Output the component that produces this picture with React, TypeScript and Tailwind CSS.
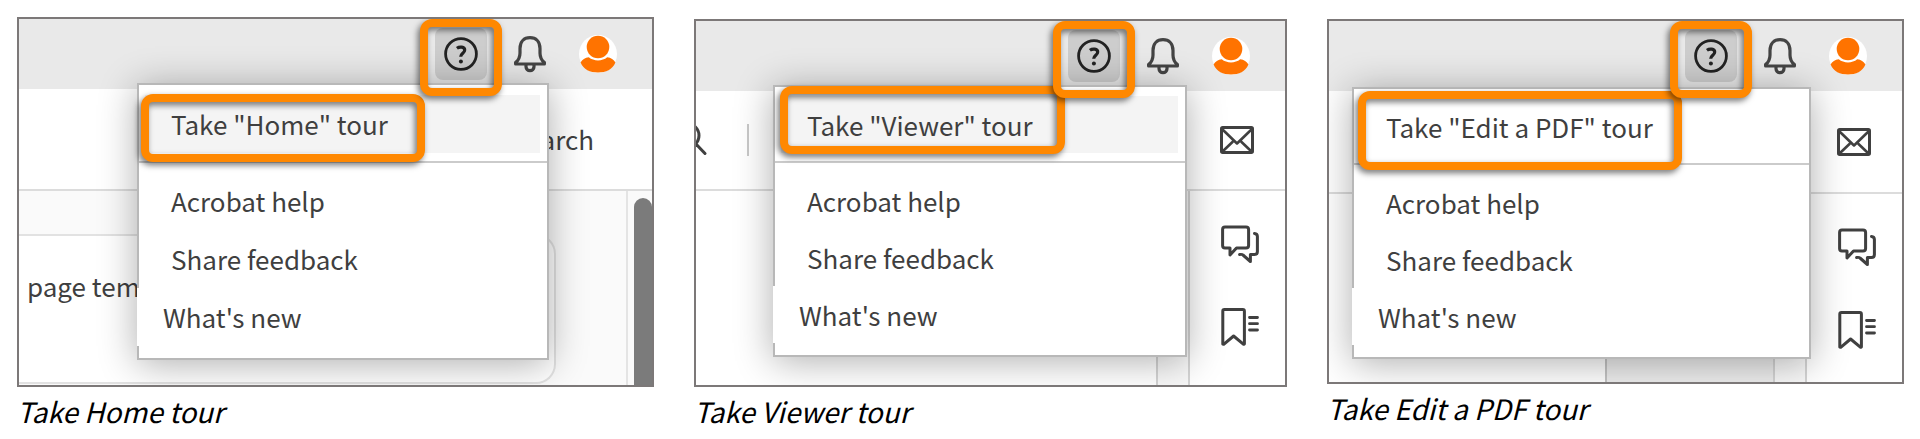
import { clsx } from 'clsx'

type Tour = {
    name: string
    caption: string
    figure: string
    toolbar: string
    body: string
    menu: string
    row: string
    active: string
    callout: string
}

const tours: Tour[] = [
    {
        name: 'Home',
        caption: 'Take Home tour',
        figure: 'grow-[637] pt-[17px]',
        toolbar: 'h-[102px]',
        body: 'h-[194px]',
        menu: 'top-16 right-[103px] w-[412px] pt-[10px]',
        row: 'h-[58px]',
        active: 'bg-[#f4f4f4]',
        callout: '-left-1 -top-px -bottom-[9px] w-[284px]',
    },
    {
        name: 'Viewer',
        caption: 'Take Viewer tour',
        figure: 'grow-[593] pt-[19px]',
        toolbar: 'h-[100px]',
        body: 'h-[194px]',
        menu: 'top-16 right-[98px] w-[414px] pt-[9px]',
        row: 'h-[57px]',
        active: 'bg-[#f4f4f4]',
        callout: '-left-px -top-[10px] -bottom-px w-[285px]',
    },
    {
        name: 'Edit a PDF',
        caption: 'Take Edit a PDF tour',
        figure: 'grow-[577] pt-[19px]',
        toolbar: 'h-[103px]',
        body: 'h-[188px]',
        menu: 'top-[66px] right-[91px] w-[459px] pt-[9px]',
        row: 'h-[57px]',
        active: 'bg-white',
        callout: '-left-0.5 -top-[7px] -bottom-[15px] w-[324px]',
    },
]

function HelpIcon() {
    return (
        <svg width="34" height="34" viewBox="0 0 34 34" fill="none" stroke="#222" strokeWidth="2.8">
            <circle cx="17" cy="17" r="15.4" />
            <path d="M12.9 11.2c2.6-1.8 7.8-1.7 7.8 1.9 0 3.1-4 3.3-4 6.7" strokeWidth="3.2" />
            <circle cx="16.9" cy="24.4" r="2" fill="#222" stroke="none" />
        </svg>
    )
}

function BellIcon() {
    return (
        <svg width="32" height="37" viewBox="0 0 32 37" fill="none" stroke="#444" strokeWidth="3.2" strokeLinejoin="round">
            <path d="M1.6 28v-1.4c3.2-2.6 4.4-5.6 4.4-9.6v-4.5C6 5.6 10 1.7 16 1.7s10 3.9 10 10.800V17c0 4 1.2 7 4.4 9.6V28z" />
            <path d="M12 29v1.7a4 4 0 0 0 8 0V29" />
        </svg>
    )
}

function Avatar() {
    return (
        <svg width="38" height="38" viewBox="0 0 38 38">
            <circle cx="19" cy="19" r="19" fill="#fff" />
            <circle cx="19" cy="12" r="11.3" fill="#ff7300" />
            <path d="M9.8 22.3c4.8 4.200 13.6 4.200 18.4 0 3.8.3 6.6 2.300 8.2 5.200C33.5 34.500 27 37.500 19 37.500S4.5 34.500 1.6 27.500c1.6-2.900 4.400-4.900 8.2-5.200z" fill="#ff7300" />
        </svg>
    )
}

function MailIcon() {
    return (
        <svg width="34" height="28" viewBox="0 0 34 28" fill="none" stroke="#404040" strokeWidth="3" strokeLinejoin="round">
            <rect x="1.5" y="1.5" width="31" height="25" rx="1.2" />
            <path d="M2 3l15 14.5L32 3M2.5 25.500l10.5-10M31.5 25.500L21 15.500" strokeWidth="2.6" />
        </svg>
    )
}

function CommentsIcon() {
    return (
        <svg width="38" height="38" viewBox="0 0 38 38" fill="none" stroke="#404040" strokeWidth="3" strokeLinejoin="round" strokeLinecap="round">
            <path d="M4 1.900h21c1.600 0 2.600 1 2.600 2.500v16c0 1.600-1 2.500-2.600 2.500H15.500L9 30v-7.100H4c-1.500 0-2.400-.9-2.400-2.500v-16c0-1.500.9-2.500 2.400-2.500z" />
            <path d="M33.500 8.500c1.900.2 2.900 1.200 2.900 3V26.500c0 2-1 3-3 3h-4V36.500l-7.400-6.500c-.6-.6-1.400-.8-3.400-.5" />
        </svg>
    )
}

function BookmarkIcon() {
    return (
        <svg width="38" height="38" viewBox="0 0 38 38" fill="none" stroke="#404040" strokeWidth="3" strokeLinejoin="round" strokeLinecap="round">
            <path d="M3.400 1.600h18.400c1 0 1.600.6 1.600 1.600v32.800l-.8.3L12.600 28 2.700 36.300l-.9-.3V3.200c0-1 .6-1.600 1.600-1.600z" />
            <path d="M28.500 9.500h8M28.500 15.700h8M28.500 22h8" strokeWidth="2.800" />
        </svg>
    )
}

function SearchIcon() {
    return (
        <svg width="11" height="32" viewBox="0 0 11 32" fill="none" stroke="#404040" strokeWidth="3" strokeLinecap="round">
            <circle cx="-9" cy="11.5" r="12" />
            <path d="M0 20l9 9.5" />
        </svg>
    )
}

// orange outline laid over the part of the UI being explained
function Callout({ className }: { className: string }) {
    return (
        <span
            className={clsx(
                'absolute z-20 border-8 border-[#ff8800] rounded-xl pointer-events-none drop-shadow-[-2px_3px_3px_rgba(0,0,0,0.55)]',
                className,
            )}
        />
    )
}

function Header() {
    return (
        <header className="flex items-center justify-end h-[70px] pr-[35px] bg-[#e9e9e9]">
            <button aria-label="Help" className="relative flex items-center justify-center size-[52px] mr-[27px] rounded-lg bg-[#cdcdcd]">
                <HelpIcon />
                <Callout className="-inset-x-[15px] -top-[9px] -bottom-4" />
            </button>
            <button aria-label="Notifications" className="mr-[33px]">
                <BellIcon />
            </button>
            <button aria-label="Account">
                <Avatar />
            </button>
        </header>
    )
}

function HomePage({ tour }: { tour: Tour }) {
    return (
        <>
            <div className={clsx('flex items-center justify-end pr-[58px] border-b-2 border-[#dcdcdc]', tour.toolbar)}>
                <span>arch</span>
            </div>
            <div className={clsx('flex bg-[#fafafa]', tour.body)}>
                <div className="grow pt-[43px] pr-[70px]">
                    <div className="flex h-[150px] pl-2 pt-7 rounded-r-[20px] border-2 border-l-0 border-[#e2e2e2] bg-white">
                        <span className="leading-[44px]">page tem</span>
                    </div>
                </div>
                <div className="w-[26px] pt-[7px] pl-[6px] border-l-2 border-[#e4e4e4]">
                    <div className="h-full rounded-t-[10px] bg-[#7b7b7b]" />
                </div>
            </div>
        </>
    )
}

function DocumentPage({ tour }: { tour: Tour }) {
    const viewer = tour.name === 'Viewer'
    return (
        <>
            <div className={clsx('flex items-center border-b-2 border-[#dcdcdc]', tour.toolbar)}>
                {viewer && (
                    <>
                        <button aria-label="Search">
                            <SearchIcon />
                        </button>
                        <span className="w-0.5 h-8 ml-10 bg-[#c9c9c9]" />
                    </>
                )}
                <div className="flex justify-center w-24 ml-auto">
                    <button aria-label="Email">
                        <MailIcon />
                    </button>
                </div>
            </div>
            <div className={clsx('flex', tour.body)}>
                <div className="grow" />
                <div className={clsx(viewer ? 'w-0' : 'w-[168px] border-l-2 border-[#c4c4c4] bg-[#ededed]')} />
                <div className="w-[34px] border-x-2 border-[#d4d4d4] bg-[#f8f8f8]" />
                <div className="flex flex-col items-center gap-[45px] w-[95px] pt-[34px] pl-1">
                    <button aria-label="Comments">
                        <CommentsIcon />
                    </button>
                    <button aria-label="Bookmarks">
                        <BookmarkIcon />
                    </button>
                </div>
            </div>
        </>
    )
}

function HelpMenu({ tour }: { tour: Tour }) {
    const item = 'flex items-center pl-[26px] text-left'
    return (
        <div className={clsx('absolute z-10 border-2 border-[#b8b8b8] bg-white pb-3 shadow-[0_4px_36px_rgba(0,0,0,0.32)]', tour.menu)}>
            <div className="flex flex-col pl-1.5 pr-[7px]">
                <button className={clsx('relative', item, tour.row, tour.active)}>
                    Take "{tour.name}" tour
                    <Callout className={tour.callout} />
                </button>
            </div>
            <div className="flex flex-col mt-2 pt-[9px] pl-1.5 border-t-2 border-[#cbcbcb]">
                <button className={clsx(item, tour.row)}>Acrobat help</button>
                <button className={clsx(item, tour.row)}>Share feedback</button>
                <button className={clsx('-ml-2 bg-white', item, tour.row)}>What's new</button>
            </div>
        </div>
    )
}

function TourFigure({ tour }: { tour: Tour }) {
    return (
        <figure className={clsx('basis-0 min-w-0', tour.figure)}>
            <div className="relative overflow-hidden border-2 border-[#7c7878] bg-white text-[26px] leading-9 text-[#3f3f3f]">
                <Header />
                {tour.name === 'Home' ? <HomePage tour={tour} /> : <DocumentPage tour={tour} />}
                <HelpMenu tour={tour} />
            </div>
            <figcaption className="pt-1.5 text-[28px] leading-9 italic text-black">{tour.caption}</figcaption>
        </figure>
    )
}

export default function App() {
    return (
        <main className="flex items-start gap-10 pl-[17px] pr-4 bg-white font-['Noto_Sans_CJK_SC',sans-serif]">
            {tours.map((tour) => (
                <TourFigure key={tour.name} tour={tour} />
            ))}
        </main>
    )
}
